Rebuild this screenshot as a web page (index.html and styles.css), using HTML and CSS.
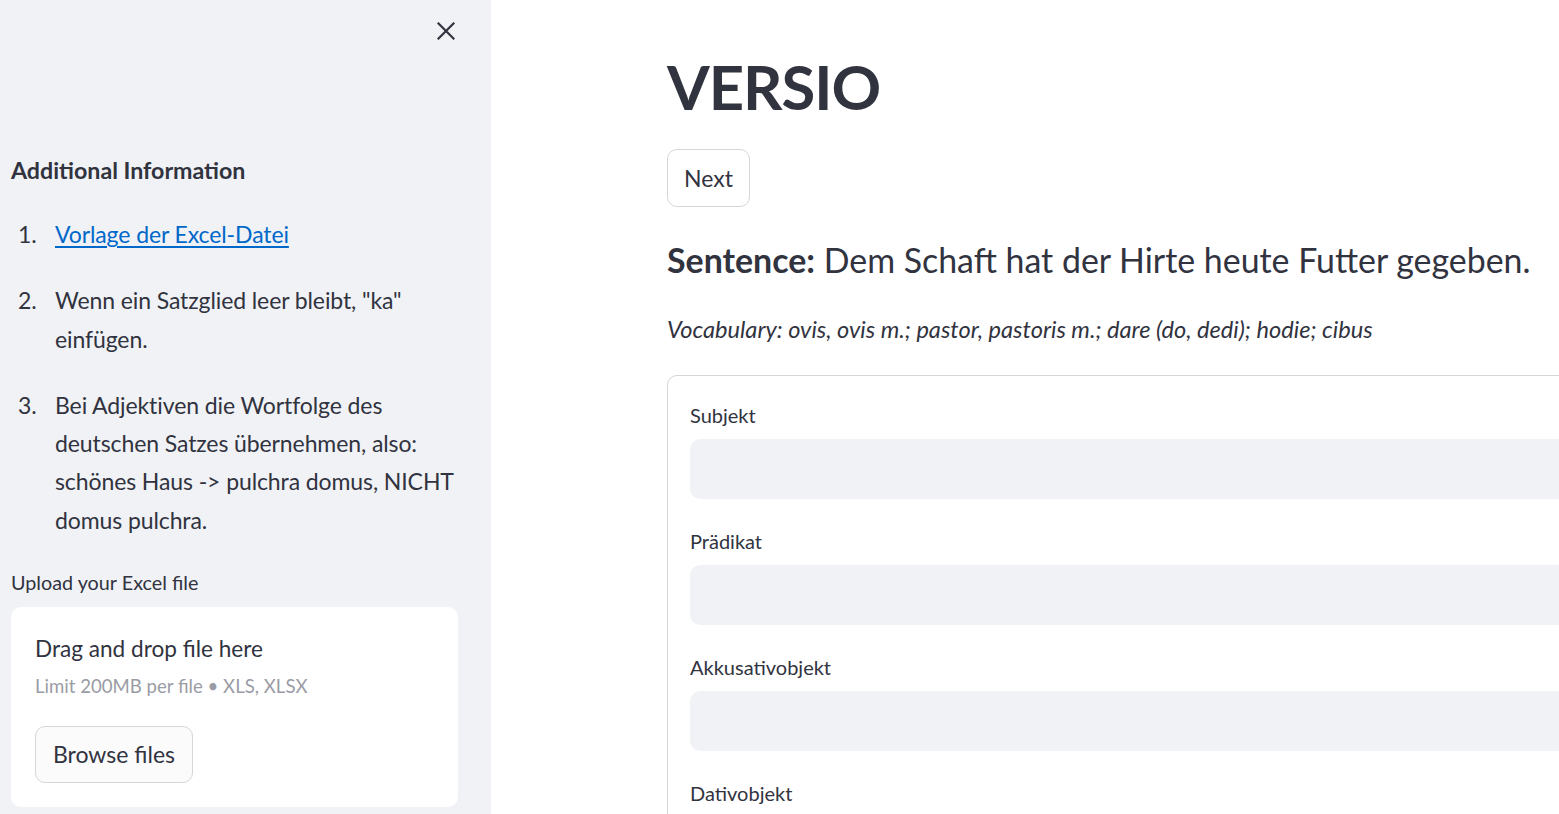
FILE: index.html
```html
<!DOCTYPE html>
<html lang="de">
<head>
<meta charset="utf-8">
<title>VERSIO</title>
<link rel="stylesheet" href="styles.css">
</head>
<body>
<aside class="sidebar">
  <div class="sidebar-head">
    <button class="close-btn" aria-label="Close sidebar">
      <svg width="18" height="18" viewBox="0 0 18 18"><path d="M1.5 1.5 L16.5 16.5 M16.5 1.5 L1.5 16.5" stroke="#31333f" stroke-width="2.2" stroke-linecap="square" fill="none"/></svg>
    </button>
  </div>
  <h3 class="side-title">Additional Information</h3>
  <ol class="info-list">
    <li><span class="num">1.</span><span class="txt"><a href="#">Vorlage der Excel-Datei</a></span></li>
    <li><span class="num">2.</span><span class="txt">Wenn ein Satzglied leer bleibt, "ka" einfügen.</span></li>
    <li><span class="num">3.</span><span class="txt">Bei Adjektiven die Wortfolge des deutschen Satzes übernehmen, also: schönes Haus -&gt; pulchra domus, NICHT domus pulchra.</span></li>
  </ol>
  <div class="upload-label">Upload your Excel file</div>
  <div class="dropzone">
    <div class="drop-title">Drag and drop file here</div>
    <div class="drop-hint">Limit 200MB per file • XLS, XLSX</div>
    <button class="browse-btn">Browse files</button>
  </div>
</aside>
<main class="main">
  <div class="content">
    <h1 class="title">VERSIO</h1>
    <button class="next-btn">Next</button>
    <p class="sentence"><strong>Sentence:</strong> Dem Schaft hat der Hirte heute Futter gegeben.</p>
    <p class="vocab">Vocabulary: ovis, ovis m.; pastor, pastoris m.; dare (do, dedi); hodie; cibus</p>
    <form class="form">
      <label class="field-label">Subjekt</label>
      <div class="field-input"></div>
      <label class="field-label">Prädikat</label>
      <div class="field-input"></div>
      <label class="field-label">Akkusativobjekt</label>
      <div class="field-input"></div>
      <label class="field-label">Dativobjekt</label>
      <div class="field-input"></div>
    </form>
  </div>
</main>
</body>
</html>
```

FILE: styles.css
```css
* { box-sizing: border-box; }
html, body { margin: 0; padding: 0; height: 100%; }
body {
  display: flex;
  overflow: hidden;
  font-family: "Lato", "Liberation Sans", sans-serif;
  color: #31333f;
  background: #ffffff;
}

/* Sidebar */
.sidebar {
  width: 491px;
  flex-shrink: 0;
  background: #f0f2f6;
  padding: 0 33px 0 11px;
  display: flex;
  flex-direction: column;
}
.sidebar-head {
  height: 152px;
  display: flex;
  justify-content: flex-end;
  align-items: flex-start;
  padding-top: 22px;
  padding-right: 3px;
}
.close-btn {
  border: 0;
  background: transparent;
  padding: 0;
  width: 18px;
  height: 18px;
  display: block;
}
.close-btn svg { display: block; }
.side-title {
  margin: 0;
  font-size: 23.2px;
  line-height: 36.8px;
  font-weight: 700;
}
.info-list {
  list-style: none;
  margin: 26.5px 0 0;
  padding: 0;
}
.info-list li {
  display: flex;
  font-size: 23px;
  line-height: 38.4px;
  margin-bottom: 27.5px;
}
.info-list .num {
  width: 44px;
  flex-shrink: 0;
  padding-left: 7px;
}
.info-list .txt { letter-spacing: -0.1px; }
.info-list a {
  color: #0068c9;
  text-decoration: underline;
  text-underline-offset: 3px;
}
.upload-label {
  font-size: 19.8px;
  line-height: 32px;
  margin-top: -0.5px;
}
.dropzone {
  margin-top: 8.7px;
  height: 200px;
  background: #ffffff;
  border-radius: 10px;
  padding: 24px 24px 24px;
  display: flex;
  flex-direction: column;
  align-items: flex-start;
}
.drop-title {
  font-size: 22.6px;
  line-height: 36.8px;
}
.drop-hint {
  font-size: 18.6px;
  line-height: 28px;
  margin-top: 4.5px;
  color: #9a9ca5;
}
.browse-btn {
  margin-top: 25.5px;
  height: 57px;
  width: 158px;
  border: 1px solid #d6d6d9;
  border-radius: 10px;
  background: #fbfbfc;
  font-family: inherit;
  font-size: 23px;
  color: #31333f;
  padding: 0;
}

/* Main */
.main {
  flex: 1;
  overflow: hidden;
  padding-left: 176px;
  padding-top: 48px;
}
.content {
  width: 980px;
}
.title {
  margin: 0;
  font-size: 61.5px;
  line-height: 76px;
  font-weight: 700;
  letter-spacing: -1px;
}
.next-btn {
  display: block;
  margin-top: 25px;
  width: 83px;
  height: 58px;
  border: 1px solid #d6d6d9;
  border-radius: 10px;
  background: #ffffff;
  font-family: inherit;
  font-size: 23px;
  color: #31333f;
  padding: 0;
}
.sentence {
  margin: 28.5px 0 0;
  font-size: 33.9px;
  line-height: 48px;
}
.sentence strong { font-weight: 700; }
.vocab {
  margin: 27px 0 0;
  font-size: 23.6px;
  line-height: 36.8px;
  font-style: italic;
}
.form {
  margin-top: 27.5px;
  border: 1px solid #d6d6d9;
  border-radius: 10px;
  padding: 23px 22px 40px;
  display: flex;
  flex-direction: column;
}
.field-label {
  font-size: 20px;
  line-height: 32px;
}
.field-input {
  margin-top: 8.7px;
  height: 60px;
  background: #f0f2f6;
  border-radius: 10px;
  margin-bottom: 25.3px;
}
```
